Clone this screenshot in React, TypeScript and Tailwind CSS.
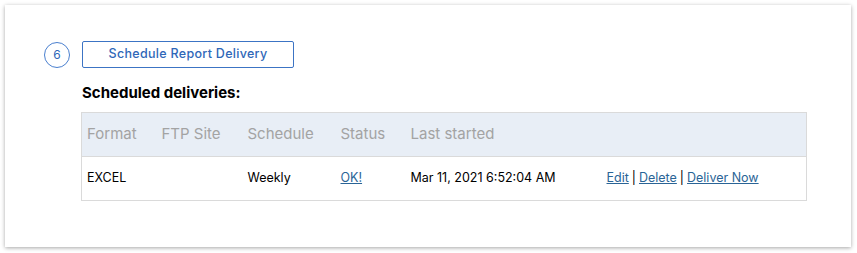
export default function App() {
  const font = { fontFamily: 'Inter, "Noto Sans", sans-serif' };
  return (
    <div className="w-[857px] h-[253px] bg-white pt-[5px] pl-[5px]" style={font}>
      <div className="w-[846px] h-[242px] bg-white shadow-[0_1px_4px_rgba(0,0,0,0.35)] pt-[36px] pl-[39px]">
        <div className="flex items-center gap-[12px]">
          <div className="w-[26px] h-[26px] rounded-full border border-[#4a7fcf] flex items-center justify-center text-[12px] text-[#2f67b8]">
            6
          </div>
          <button className="w-[212px] h-[27px] border border-[#3c74c4] rounded-[2px] text-[12.5px] font-medium text-[#2f67b8] tracking-[0.3px]">
            Schedule Report Delivery
          </button>
        </div>
        <div className="ml-[38px] mt-[14px] text-[15px] font-bold text-black">Scheduled deliveries:</div>
        <table className="ml-[37px] mt-[7px] w-[726px] border border-[#dadada] border-collapse text-[12.5px]">
          <thead>
            <tr className="bg-[#e8eef6] h-[44px] text-[15px] text-[#a3a3a3] text-left">
              <th className="font-normal pl-[5px] w-[75px]">Format</th>
              <th className="font-normal pl-[5px] w-[86px]">FTP Site</th>
              <th className="font-normal pl-[5px] w-[93px]">Schedule</th>
              <th className="font-normal pl-[5px] w-[70px]">Status</th>
              <th className="font-normal pl-[5px] w-[195px]">Last started</th>
              <th className="font-normal"></th>
            </tr>
          </thead>
          <tbody>
            <tr className="h-[44px] border-t border-[#dadada] text-black">
              <td className="pl-[5px]">EXCEL</td>
              <td className="pl-[5px]"></td>
              <td className="pl-[5px]">Weekly</td>
              <td className="pl-[5px]">
                <a href="#" className="underline text-[#2a6496]">OK!</a>
              </td>
              <td className="pl-[5px]">Mar 11, 2021 6:52:04 AM</td>
              <td className="pl-[6px]">
                <a href="#" className="underline text-[#2a6496]">Edit</a>
                <span className="mx-[3px]">|</span>
                <a href="#" className="underline text-[#2a6496]">Delete</a>
                <span className="mx-[3px]">|</span>
                <a href="#" className="underline text-[#2a6496]">Deliver Now</a>
              </td>
            </tr>
          </tbody>
        </table>
      </div>
    </div>
  );
}
